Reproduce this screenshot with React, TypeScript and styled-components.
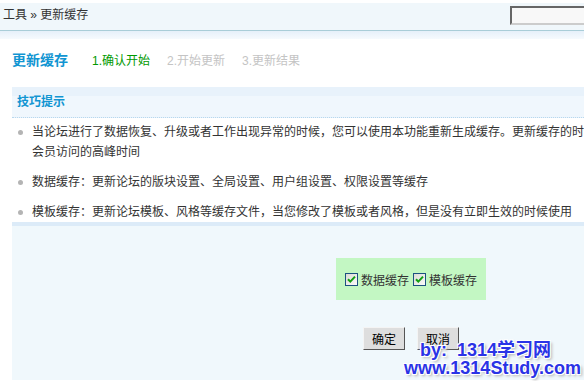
import styled, { createGlobalStyle } from "styled-components";

const GlobalStyle = createGlobalStyle`
  body {
    margin: 0;
    background: #fff;
    color: #333;
    font: 12px "Liberation Sans", "Noto Sans CJK SC", sans-serif;
    overflow: hidden;
  }
`;

const Page = styled.div`
  position: relative;
  width: 810px;
  height: 381px;
  overflow: hidden;
`;

const TopBar = styled.div`
  margin-top: 3px;
  height: 27px;
  padding-left: 3px;
  background: #f0f7fb;
  border-bottom: 1px solid #a9cdd8;
  display: flex;
  justify-content: space-between;
  align-items: flex-start;
`;

const Crumbs = styled.div`
  line-height: 24px;
  color: #333;
`;

const Search = styled.input`
  width: 300px;
  height: 19px;
  margin-top: 3px;
  box-sizing: border-box;
  background: #f8f8f8;
  border: 2px solid;
  border-color: #666 #ccc #ccc #666;
`;

const Band = styled.div`
  height: 8px;
  background: linear-gradient(#e6f0fa, #f6fafe);
`;

const Main = styled.div`
  padding-left: 12px;
`;

const TitleRow = styled.div`
  display: flex;
  align-items: center;
  height: 20px;
  padding: 10px 0 18px;
`;

const Title = styled.h1`
  margin: 0 24px 0 0;
  font-size: 14px;
  font-weight: bold;
  color: #1195d2;
`;

const Step = styled.span<{ $active?: boolean }>`
  margin-right: 17px;
  color: ${(p) => (p.$active ? "#009900" : "#c4c4c4")};
`;

const Tips = styled.div`
  width: 798px;
`;

const TipsHead = styled.div`
  height: 30px;
  line-height: 31px;
  padding-left: 5px;
  font-weight: bold;
  color: #1195d2;
  background: linear-gradient(#e8f2fb 0, #e8f2fb 9px, #f0f7fd 9px);
  border-bottom: 1px dotted #b8d8ee;
`;

const TipList = styled.ul`
  margin: 0;
  padding: 4px 0 0;
  list-style: none;
`;

const Tip = styled.li`
  display: flex;
  align-items: flex-start;
  line-height: 20px;
  margin-bottom: 10px;
  &:last-child {
    margin-bottom: 0;
  }
`;

const Dot = styled.span`
  flex: none;
  width: 5px;
  height: 5px;
  border-radius: 50%;
  background: #b4b4b4;
  margin: 8px 9px 0 6px;
`;

const TipText = styled.span`
  width: 770px;
`;

const Panel = styled.div`
  width: 798px;
  height: 158px;
  box-sizing: border-box;
  border-top: 4px solid #dcebf8;
  background: #f0f8fc;
  display: flex;
  flex-direction: column;
  align-items: center;
  padding-top: 32px;
`;

const Choices = styled.div`
  display: flex;
  align-items: center;
  height: 42px;
  padding: 0 9px;
  background: #c3f7c3;
`;

const Choice = styled.label`
  display: flex;
  align-items: center;
  gap: 3px;
  margin-right: 4px;
  color: #333;
  &:last-child {
    margin-right: 0;
  }
`;

const Box = styled.span`
  width: 13px;
  height: 13px;
  box-sizing: border-box;
  border: 1px solid #1c5180;
  background: linear-gradient(135deg, #dcdcd4, #fafafa);
  display: flex;
  align-items: center;
  justify-content: center;
`;

const Buttons = styled.div`
  display: flex;
  gap: 12px;
  margin-top: 27px;
`;

const Button = styled.button`
  width: 42px;
  height: 23px;
  padding: 0;
  background: #dedede;
  color: #000;
  font: 12px "Liberation Sans", "Noto Sans CJK SC", sans-serif;
  border: 1px solid;
  border-color: #f4f4f4 #555 #555 #f4f4f4;
`;

const Watermark = styled.div`
  position: absolute;
  left: 404px;
  top: 341px;
  font: bold 18px/18px "Liberation Sans", "Noto Sans CJK SC", sans-serif;
  color: #2a33e6;
  text-shadow: 1px 1px 0 #fff, -1px -1px 0 #fff, 1px -1px 0 #fff, -1px 1px 0 #fff,
    2px 2px 3px #aaa;
  white-space: pre;
`;

const WatermarkLine = styled.div<{ $indent?: number }>`
  padding-left: ${(p) => p.$indent ?? 0}px;
`;

function Check({ label }: { label: string }) {
  return (
    <Choice>
      <Box>
        <svg width="9" height="9" viewBox="0 0 9 9">
          <path d="M1 4.2 L3.3 6.6 L8 1.6" stroke="#11a011" strokeWidth="2" fill="none" />
        </svg>
      </Box>
      {label}
    </Choice>
  );
}

export default function App() {
  return (
    <Page>
      <GlobalStyle />
      <TopBar>
        <Crumbs>工具 » 更新缓存</Crumbs>
        <Search type="text" />
      </TopBar>
      <Band />
      <Main>
        <TitleRow>
          <Title>更新缓存</Title>
          <Step $active>1.确认开始</Step>
          <Step>2.开始更新</Step>
          <Step>3.更新结果</Step>
        </TitleRow>
        <Tips>
          <TipsHead>技巧提示</TipsHead>
          <TipList>
            <Tip>
              <Dot />
              <TipText>
                当论坛进行了数据恢复、升级或者工作出现异常的时候，您可以使用本功能重新生成缓存。更新缓存的时候，可能让服务器负载升高，请尽量避开会员访问的高峰时间
              </TipText>
            </Tip>
            <Tip>
              <Dot />
              <TipText>数据缓存：更新论坛的版块设置、全局设置、用户组设置、权限设置等缓存</TipText>
            </Tip>
            <Tip>
              <Dot />
              <TipText>模板缓存：更新论坛模板、风格等缓存文件，当您修改了模板或者风格，但是没有立即生效的时候使用</TipText>
            </Tip>
          </TipList>
        </Tips>
        <Panel>
          <Choices>
            <Check label="数据缓存" />
            <Check label="模板缓存" />
          </Choices>
          <Buttons>
            <Button>确定</Button>
            <Button>取消</Button>
          </Buttons>
        </Panel>
      </Main>
      <Watermark>
        <WatermarkLine $indent={16}>by:  1314学习网</WatermarkLine>
        <WatermarkLine>www.1314Study.com</WatermarkLine>
      </Watermark>
    </Page>
  );
}
